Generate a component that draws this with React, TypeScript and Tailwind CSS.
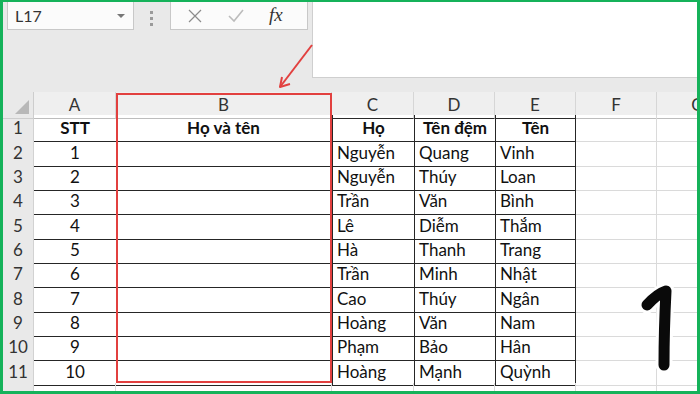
import React from "react";

const font = { fontFamily: "Lato, 'Noto Sans', sans-serif" };

const rows = [
  ["STT", "Họ và tên", "Họ", "Tên đệm", "Tên"],
  ["1", "", "Nguyễn", "Quang", "Vinh"],
  ["2", "", "Nguyễn", "Thúy", "Loan"],
  ["3", "", "Trần", "Văn", "Bình"],
  ["4", "", "Lê", "Diễm", "Thắm"],
  ["5", "", "Hà", "Thanh", "Trang"],
  ["6", "", "Trần", "Minh", "Nhật"],
  ["7", "", "Cao", "Thúy", "Ngân"],
  ["8", "", "Hoàng", "Văn", "Nam"],
  ["9", "", "Phạm", "Bảo", "Hân"],
  ["10", "", "Hoàng", "Mạnh", "Quỳnh"],
];

const heights = ["h-[25px]", "h-[24px]", "h-[24px]", "h-[25px]", "h-[24px]", "h-[24px]", "h-[25px]", "h-[24px]", "h-[24px]", "h-[25px]", "h-[24px]"];

const cols = "grid grid-cols-[31px_82px_216px_82px_81px_81px_81px_82px] w-[736px]";

function Toolbar() {
  return (
    <div className="flex h-[90px] items-start bg-[#e9e9e9]">
      <div className="ml-[4px] flex h-[28px] w-[127px] items-center justify-between border border-t-0 border-[#c8c8c8] bg-[#fbfbfb] pl-[7px] pr-[8px] text-[16px] text-[#333]">
        <span>L17</span>
        <span className="h-0 w-0 border-l-[4px] border-r-[4px] border-t-[4px] border-l-transparent border-r-transparent border-t-[#777]" />
      </div>
      <div className="ml-[16px] mt-[9px] flex w-[3px] flex-col gap-[3px]">
        <span className="h-[3px] w-[3px] bg-[#9a9a9a]" />
        <span className="h-[3px] w-[3px] bg-[#9a9a9a]" />
        <span className="h-[3px] w-[3px] bg-[#9a9a9a]" />
      </div>
      <div className="ml-[17px] flex h-[28px] w-[138px] items-center border border-t-0 border-[#c8c8c8] bg-[#fbfbfb]">
        <svg width="14" height="14" viewBox="0 0 14 14" className="ml-[17px]">
          <path d="M1 1 L13 13 M13 1 L1 13" stroke="#8c8c8c" strokeWidth="1.2" fill="none" />
        </svg>
        <svg width="16" height="14" viewBox="0 0 16 14" className="ml-[26px]">
          <path d="M1 7 L6 12 L15 1" stroke="#bcbcbc" strokeWidth="1.6" fill="none" />
        </svg>
        <span className="ml-[25px] text-[19px] italic text-[#333]" style={{ fontFamily: "'Liberation Serif', serif" }}>
          fx
        </span>
      </div>
      <div className="ml-[4px] h-[76px] flex-1 border-b border-l border-[#cfcfcf] bg-white" />
    </div>
  );
}

function HeaderRow() {
  const letters = ["A", "B", "C", "D", "E", "F", "G"];
  return (
    <div className={`${cols} h-[23px] bg-[#efefef] text-[17px] text-[#333]`}>
      <div className="relative border-b border-r border-[#cdcdcd] bg-[#e9e9e9]">
        <span className="absolute bottom-[4px] right-[4px] h-0 w-0 border-b-[14px] border-l-[14px] border-b-[#b8b8b8] border-l-transparent" />
      </div>
      {letters.map((l, i) => (
        <div
          key={l}
          className={`flex items-center justify-center border-r border-[#d6d6d6] border-b ${
            i >= 2 && i <= 4 ? "border-b-[#2a2a2a]" : "border-b-[#bdbdbd]"
          }`}
        >
          {l}
        </div>
      ))}
    </div>
  );
}

function DataRow({ r, i }: { r: string[]; i: number }) {
  const bold = i === 0;
  const dark = "border-b-[1.5px] border-b-[#262626]";
  return (
    <div className={`${cols} ${heights[i]} text-[17px] text-[#111]`}>
      <div className="flex items-center justify-center border-b border-r border-[#d2d2d2] bg-[#e9e9e9] text-[#333]">
        {i + 1}
      </div>
      <div className={`flex items-center justify-center ${dark} ${bold ? "font-bold" : ""}`}>{r[0]}</div>
      <div className={`flex items-center justify-center border-r border-r-[#d6d6d6] ${dark} ${bold ? "font-bold" : ""}`}>
        {r[1]}
      </div>
      {[r[2], r[3], r[4]].map((t, k) => (
        <div
          key={k}
          className={`flex items-center ${bold ? "justify-center font-bold" : "pl-[4px]"} border-l-[1.5px] border-l-[#262626] ${dark} ${
            k === 2 ? "border-r-[1.5px] border-r-[#262626]" : ""
          }`}
        >
          {t}
        </div>
      ))}
      <div className="border-b border-r border-[#dadada]" />
      <div className="border-b border-r border-[#dadada]" />
    </div>
  );
}

export default function App() {
  return (
    <div
      className="relative h-[394px] w-[700px] overflow-hidden border-b-[3px] border-l-[3px] border-r-[3px] border-t-2 border-[#15b25a] bg-white"
      style={font}
    >
      <Toolbar />
      <HeaderRow />
      {rows.map((r, i) => (
        <DataRow key={i} r={r} i={i} />
      ))}
      <div className={`${cols} h-[10px]`}>
        <div className="border-r border-[#d2d2d2] bg-[#e9e9e9]" />
        <div className="border-r border-[#dadada]" />
        <div className="border-r border-[#dadada]" />
        <div className="border-r border-[#dadada]" />
        <div className="border-r border-[#dadada]" />
        <div className="border-r border-[#dadada]" />
        <div className="border-r border-[#dadada]" />
        <div />
      </div>

      {/* red highlight box around column B */}
      <div className="absolute left-[113px] top-[91px] h-[290px] w-[216px] border-2 border-[#e2403f]" />

      {/* arrow */}
      <svg className="absolute left-0 top-0" width="700" height="394">
        <path d="M309 43 L277 85" stroke="#e2403f" strokeWidth="2" fill="none" />
        <path d="M279 75 L277 85 L287 82" stroke="#e2403f" strokeWidth="2" fill="none" strokeLinejoin="round" />
      </svg>

      {/* handwritten 1 */}
      <svg className="absolute left-0 top-0" width="700" height="394">
        <path d="M647 305 Q657 294 666 291 Q664 330 664 365" stroke="#fff" strokeWidth="17" strokeLinecap="round" strokeLinejoin="round" fill="none" transform="translate(-3,-2)" />
        <path d="M647 305 Q657 294 666 291 Q664 330 664 365" stroke="#0a0a0a" strokeWidth="11" strokeLinecap="round" strokeLinejoin="round" fill="none" transform="translate(-3,-2)" />
      </svg>
    </div>
  );
}
